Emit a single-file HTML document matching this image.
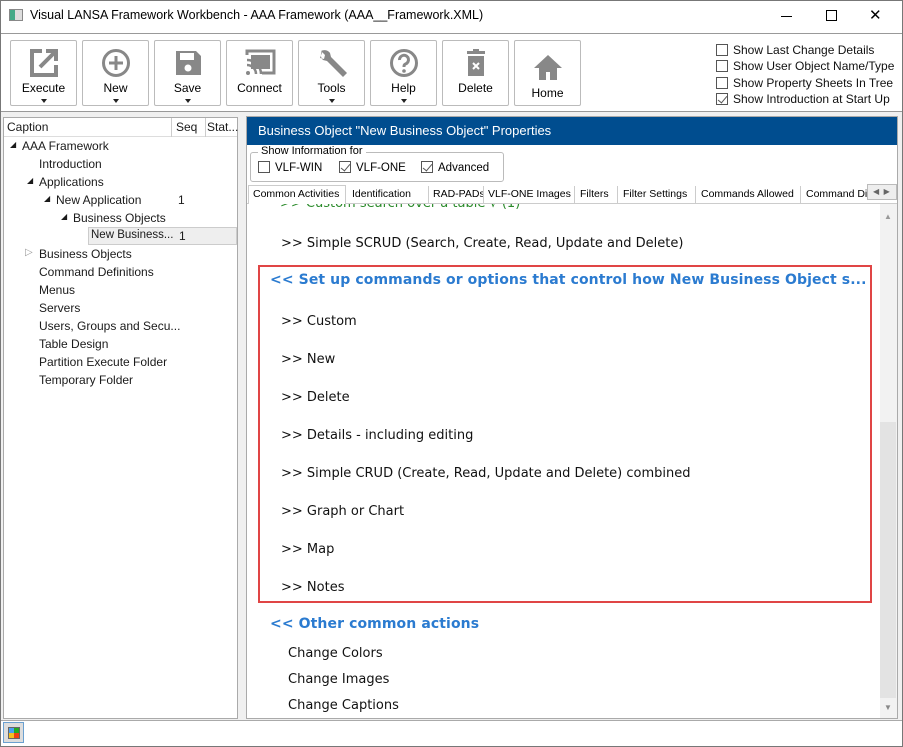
<!DOCTYPE html>
<html><head><style>
*{box-sizing:border-box;margin:0;padding:0}
body{width:903px;height:747px;position:relative;background:#f0f0f0;font-family:"Liberation Sans",sans-serif;font-size:12px;color:#000;overflow:hidden}
.a{position:absolute;white-space:nowrap}
.win{left:0;top:0;width:903px;height:747px;border:1px solid #777;background:#fff}
.btn{position:absolute;top:40px;width:67px;height:66px;border:1px solid #bbb;border-radius:2px;background:#fff;text-align:center}
.btn .l{position:absolute;left:0;right:0;top:40px;font-size:12px}
.btn .dd{position:absolute;left:30px;top:58px;border-left:3px solid transparent;border-right:3px solid transparent;border-top:4px solid #222}
.btn svg{position:absolute;left:17px;top:6px}
.cb{display:inline-block;width:12px;height:12px;border:1px solid #555;background:#fff;vertical-align:-2px;margin-right:5px;position:relative}
.cb.k::after{content:"";position:absolute;left:3px;top:0px;width:4px;height:8px;border:solid #555;border-width:0 1.5px 1.5px 0;transform:rotate(40deg)}
.tree div{position:absolute;font-size:12px;color:#1a1a1a;white-space:nowrap}
.c{font-family:"DejaVu Sans",sans-serif;font-size:13px;position:absolute;color:#111;white-space:nowrap}
.h{font-family:"DejaVu Sans",sans-serif;font-size:14px;letter-spacing:0.1px;font-weight:bold;color:#2b7bd0;position:absolute;white-space:nowrap}
.tab{position:absolute;top:186px;height:18px;font-size:10.5px;padding-top:2px;border-right:1px solid #ccc;white-space:nowrap;overflow:hidden}
</style></head><body>
<div class="a win"></div>
<div class="a" style="left:9px;top:9px;width:14px;height:12px;border:1px solid #888;background:linear-gradient(90deg,#4a8 0 40%,#ddd 40%)"></div>
<div class="a" style="left:30px;top:8px;font-size:12.5px">Visual LANSA Framework Workbench - AAA Framework (AAA__Framework.XML)</div>
<div class="a" style="left:781px;top:16px;width:11px;height:1px;background:#000"></div>
<div class="a" style="left:826px;top:10px;width:11px;height:11px;border:1px solid #000"></div>
<div class="a" style="left:869px;top:6px;font-size:15px">✕</div>
<div class="a" style="left:1px;top:33px;width:901px;height:1px;background:#999"></div>
<div class="btn" style="left:10px"><svg width="32" height="32" viewBox="0 0 32 32"><path d="M14 4H4v24h24V18" fill="none" stroke="#888" stroke-width="4"/><path d="M12 20L26 6M18 4h10v10" fill="none" stroke="#888" stroke-width="4"/></svg><div class="l">Execute</div><div class="dd"></div></div>
<div class="btn" style="left:82px"><svg width="32" height="32" viewBox="0 0 32 32"><circle cx="16" cy="16" r="12.5" fill="none" stroke="#888" stroke-width="3"/><path d="M16 9v14M9 16h14" stroke="#888" stroke-width="3"/></svg><div class="l">New</div><div class="dd"></div></div>
<div class="btn" style="left:154px"><svg width="32" height="32" viewBox="0 0 32 32"><path d="M4 4h20l5 5v19H4z" fill="#888"/><rect x="8" y="6" width="14" height="7" fill="#fff"/><circle cx="16" cy="21" r="3.5" fill="#fff"/></svg><div class="l">Save</div><div class="dd"></div></div>
<div class="btn" style="left:226px"><svg width="32" height="32" viewBox="0 0 32 32"><path d="M3 8V4h27v22H18" fill="none" stroke="#888" stroke-width="3"/><rect x="7" y="8" width="19" height="14" fill="#888"/><path d="M3 13a14 14 0 0 1 14 14M3 18a9 9 0 0 1 9 9" fill="none" stroke="#888" stroke-width="2.5"/><circle cx="4" cy="26" r="2" fill="#888"/></svg><div class="l">Connect</div></div>
<div class="btn" style="left:298px"><svg width="34" height="32" viewBox="0 0 32 32"><path d="M6 3a7 7 0 0 0 0 10l4 1 16 16 4-4L14 10l-1-4A7 7 0 0 0 4 4l4 4-1 4-4-1z" fill="#888"/></svg><div class="l">Tools</div><div class="dd"></div></div>
<div class="btn" style="left:370px"><svg width="32" height="32" viewBox="0 0 32 32"><circle cx="16" cy="16" r="12.5" fill="none" stroke="#888" stroke-width="3"/><path d="M11.5 13a4.5 4.5 0 1 1 6 4c-1.5.7-1.5 1.5-1.5 3" fill="none" stroke="#888" stroke-width="3"/><circle cx="16" cy="24" r="1.8" fill="#888"/></svg><div class="l">Help</div><div class="dd"></div></div>
<div class="btn" style="left:442px"><svg width="32" height="32" viewBox="0 0 32 32"><rect x="7" y="4" width="18" height="3" fill="#888"/><rect x="13" y="2" width="6" height="3" fill="#888"/><path d="M8 9h16v20H8z" fill="#888"/><path d="M13 16l6 6M19 16l-6 6" stroke="#fff" stroke-width="2"/></svg><div class="l">Delete</div></div>
<div class="btn" style="left:514px"><svg width="32" height="34" viewBox="0 0 32 32" style="top:10px"><path d="M16 3L2 16h5v12h7v-8h4v8h7V16h5z" fill="#888"/></svg><div class="l" style="top:45px">Home</div></div>
<div class="a" style="left:716px;top:42px;font-size:12px;line-height:16.3px;color:#111">
<div><span class="cb"></span>Show Last Change Details</div>
<div><span class="cb"></span>Show User Object Name/Type</div>
<div><span class="cb"></span>Show Property Sheets In Tree</div>
<div><span class="cb k"></span>Show Introduction at Start Up</div></div>
<div class="a" style="left:1px;top:111px;width:901px;height:1px;background:#999"></div>
<div class="a" style="left:1px;top:112px;width:901px;height:609px;background:#f0f0f0"></div>
<div class="a" style="left:3px;top:117px;width:235px;height:602px;background:#fff;border:1px solid #aaa"></div>
<div class="a" style="left:4px;top:118px;width:233px;height:19px;border-bottom:1px solid #ddd;background:#fff"></div>
<div class="a" style="left:171px;top:118px;width:1px;height:19px;background:#ccc"></div>
<div class="a" style="left:205px;top:118px;width:1px;height:19px;background:#ccc"></div>
<div class="tree">
<div style="left:7px;top:120px">Caption</div><div style="left:176px;top:120px">Seq</div><div style="left:207px;top:120px">Stat...</div>
<div style="left:10px;top:140px;font-size:8px">◢</div><div style="left:22px;top:139px">AAA Framework</div>
<div style="left:39px;top:157px">Introduction</div>
<div style="left:27px;top:176px;font-size:8px">◢</div><div style="left:39px;top:175px">Applications</div>
<div style="left:44px;top:194px;font-size:8px">◢</div><div style="left:56px;top:193px">New Application</div><div style="left:178px;top:193px">1</div>
<div style="left:61px;top:212px;font-size:8px">◢</div><div style="left:73px;top:211px">Business Objects</div>
<div style="left:88px;top:227px;width:149px;height:18px;background:#eee;border:1px solid #ccc"></div>
<div style="left:91px;top:229px;font-size:11.5px">New Business...</div><div style="left:179px;top:229px">1</div>
<div style="left:25px;top:247px;font-size:10px;color:#999">▷</div><div style="left:39px;top:247px">Business Objects</div>
<div style="left:39px;top:265px">Command Definitions</div>
<div style="left:39px;top:283px">Menus</div>
<div style="left:39px;top:301px">Servers</div>
<div style="left:39px;top:319px">Users, Groups and Secu...</div>
<div style="left:39px;top:337px">Table Design</div>
<div style="left:39px;top:355px">Partition Execute Folder</div>
<div style="left:39px;top:373px">Temporary Folder</div>
</div>
<div class="a" style="left:246px;top:116px;width:652px;height:603px;background:#fff;border:1px solid #aaa"></div>
<div class="a" style="left:247px;top:117px;width:650px;height:28px;background:#004d8f;color:#fff;font-size:13px;padding:6px 0 0 11px">Business Object "New Business Object" Properties</div>
<div class="a" style="left:250px;top:152px;width:254px;height:30px;border:1px solid #bbb;border-radius:3px"></div>
<div class="a" style="left:258px;top:145px;background:#fff;padding:0 3px;font-size:11px">Show Information for</div>
<div class="a" style="left:258px;top:161px;font-size:11.5px"><span class="cb"></span>VLF-WIN</div>
<div class="a" style="left:339px;top:161px;font-size:11.5px"><span class="cb k"></span>VLF-ONE</div>
<div class="a" style="left:421px;top:161px;font-size:11.5px"><span class="cb k"></span>Advanced</div>
<div class="a" style="left:247px;top:203px;width:650px;height:1px;background:#ccc"></div>
<div class="a" style="left:248px;top:185px;width:98px;height:19px;border:1px solid #ccc;border-bottom:none;background:#fff"></div>
<div class="tab" style="left:253px;border:none">Common Activities</div>
<div class="tab" style="left:347px;padding-left:5px;width:82px">Identification</div>
<div class="tab" style="left:429px;padding-left:4px;width:55px">RAD-PADs</div>
<div class="tab" style="left:484px;padding-left:4px;width:91px">VLF-ONE Images</div>
<div class="tab" style="left:575px;padding-left:5px;width:43px">Filters</div>
<div class="tab" style="left:618px;padding-left:5px;width:78px">Filter Settings</div>
<div class="tab" style="left:696px;padding-left:5px;width:105px">Commands Allowed</div>
<div class="tab" style="left:801px;padding-left:5px;width:66px;border:none">Command Dis</div>
<div class="a" style="left:867px;top:184px;width:30px;height:16px;background:#eee;border:1px solid #bbb;font-size:8px;color:#666;padding:2px 0 0 5px">◀ &nbsp;▶</div>
<div class="a" style="left:247px;top:204px;width:633px;height:514px;overflow:hidden">
<div class="c" style="left:33px;top:-8px;color:#2a8a2a">&gt;&gt; Custom search over a table  √ (1)</div>
</div>
<div class="c" style="left:281px;top:236px">&gt;&gt; Simple SCRUD (Search, Create, Read, Update and Delete)</div>
<div class="a" style="left:258px;top:265px;width:614px;height:338px;border:2px solid #e04545"></div>
<div class="a" style="left:262px;top:268px;width:606px;height:26px;overflow:hidden">
<div class="h" style="left:8px;top:4px">&lt;&lt; Set up commands or options that control how New Business Object s...</div></div>
<div class="c" style="left:281px;top:314px">&gt;&gt; Custom</div>
<div class="c" style="left:281px;top:352px">&gt;&gt; New</div>
<div class="c" style="left:281px;top:390px">&gt;&gt; Delete</div>
<div class="c" style="left:281px;top:428px">&gt;&gt; Details - including editing</div>
<div class="c" style="left:281px;top:466px">&gt;&gt; Simple CRUD (Create, Read, Update and Delete) combined</div>
<div class="c" style="left:281px;top:504px">&gt;&gt; Graph or Chart</div>
<div class="c" style="left:281px;top:542px">&gt;&gt; Map</div>
<div class="c" style="left:281px;top:580px">&gt;&gt; Notes</div>
<div class="h" style="left:270px;top:616px">&lt;&lt; Other common actions</div>
<div class="c" style="left:288px;top:646px">Change Colors</div>
<div class="c" style="left:288px;top:672px">Change Images</div>
<div class="c" style="left:288px;top:698px">Change Captions</div>
<div class="a" style="left:880px;top:204px;width:17px;height:514px;background:#f2f2f2"></div>
<div class="a" style="left:880px;top:422px;width:16px;height:276px;background:#e3e3e3"></div>
<div class="a" style="left:884px;top:212px;font-size:8px;color:#999">▲</div>
<div class="a" style="left:884px;top:703px;font-size:8px;color:#888">▼</div>
<div class="a" style="left:1px;top:720px;width:901px;height:1px;background:#aaa"></div>
<div class="a" style="left:3px;top:722px;width:21px;height:21px;border:1px solid #6aa0d0;background:#ddd"></div>
<div class="a" style="left:8px;top:727px;width:12px;height:12px;background:linear-gradient(90deg,#4aa0f0 50%,#2a2 50%);border:1px solid #666"></div>
<div class="a" style="left:9px;top:733px;width:10px;height:5px;background:linear-gradient(90deg,#f4c020 50%,#f04010 50%)"></div>
</body></html>
